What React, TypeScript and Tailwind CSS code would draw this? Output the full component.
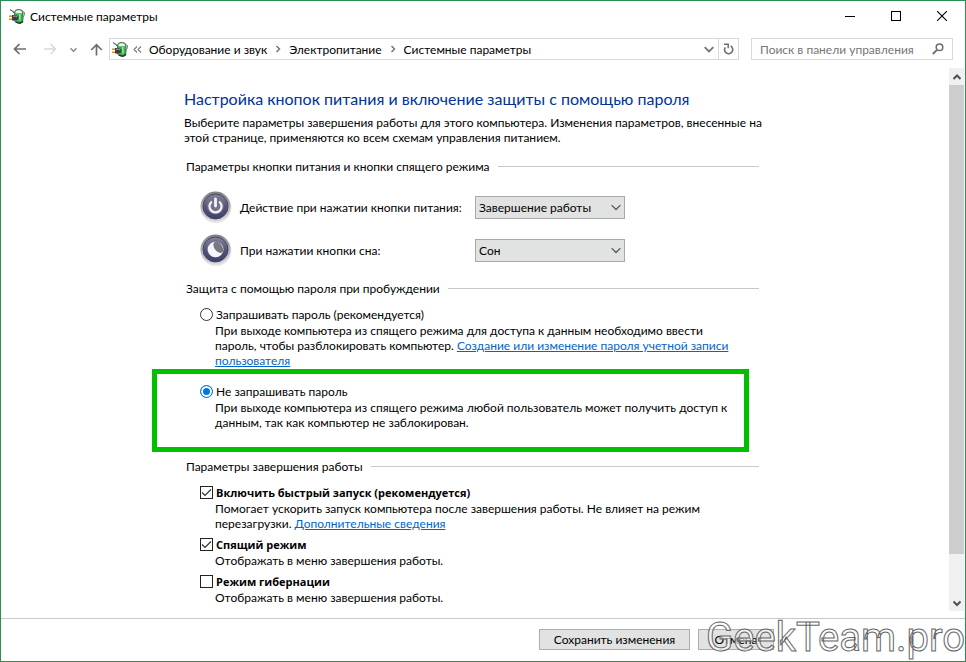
import React, { useState } from 'react';

const PowerAppIcon: React.FC = () => (
  <svg width="16" height="16" viewBox="0 0 16 16" className="shrink-0">
    <rect x="5.5" y="1.5" width="8.5" height="13.5" rx="3.5" fill="#2fb548" stroke="#5b6b5d" />
    <path d="M6.5 3.8C7 1.6 12.5 1.6 13 3.8v1.4H6.5z" fill="#eef3ee" />
    <path d="M10.8 6v6.5" stroke="#8bea98" strokeWidth="1.6" />
    <path d="M13.5 3.8c2.6-.6 2.6 3 .6 5.4" fill="none" stroke="#777" />
    <path d="M1.2 1.4C2 3.6 4 1.8 5 5" fill="none" stroke="#555" strokeWidth="1.1" />
    <path d="M0 8.2h3M0 11.2h3" stroke="#e0901c" strokeWidth="1.5" />
    <path d="M3 7h3.4l3 1.4v2.8l-3 1.4H3z" fill="#3d3d42" />
    <path d="M4 8.2h2.4l1.8.8" fill="none" stroke="#a5a5ad" />
    <path d="M7 14.2l4 1.2 3.2-2" fill="none" stroke="#2c2f31" strokeWidth="1.3" />
  </svg>
);

const RoundIcon: React.FC<{ kind: 'power' | 'sleep' }> = ({ kind }) => (
  <svg width="32" height="32" viewBox="0 0 32 32" className="shrink-0">
    <defs>
      <linearGradient id={`ring-${kind}`} x1="0" y1="0" x2="0" y2="1">
        <stop offset="0" stopColor="#7f7f82" />
        <stop offset="1" stopColor="#dcdce0" />
      </linearGradient>
      <linearGradient id={`face-${kind}`} x1="0" y1="0" x2="0" y2="1">
        <stop offset="0" stopColor="#85869a" />
        <stop offset="0.5" stopColor="#55567a" />
        <stop offset="1" stopColor="#3f4068" />
      </linearGradient>
    </defs>
    <circle cx="16" cy="16.5" r="15.5" fill="#e6e6e9" />
    <circle cx="15.5" cy="15.5" r="15" fill={`url(#ring-${kind})`} />
    <circle cx="15.5" cy="15.5" r="12.5" fill={`url(#face-${kind})`} stroke="#44455f" />
    <circle cx="15.5" cy="15" r="8.5" fill="#73748c" />
    {kind === 'power' ? (
      <g fill="none" stroke="#f4f4f8" strokeWidth="2.2" strokeLinecap="round">
        <path d="M11.2 11.2a6 6 0 1 0 8.6 0" />
        <path d="M15.5 8v7" strokeWidth="2.8" />
      </g>
    ) : (
      <g>
        <circle cx="15.5" cy="15.5" r="7.8" fill="#f6f6fa" />
        <ellipse cx="18.3" cy="13.3" rx="3.8" ry="6.4" transform="rotate(-38 18.3 13.3)" fill="#77787f" />
      </g>
    )}
  </svg>
);

interface ChevronProps {
  dir: 'down' | 'up' | 'right';
  size?: number;
  color?: string;
  width?: number;
}

const Chevron: React.FC<ChevronProps> = ({ dir, size = 8, color = '#777', width = 1.5 }) => {
  const paths = { down: 'M0.5 2.5 4 6 7.5 2.5', up: 'M0.5 6 4 2.5 7.5 6', right: 'M2.5 1 5.5 4 2.5 7' };
  return (
    <svg width={size} height={size} viewBox="0 0 8 8" className="pointer-events-none shrink-0">
      <path d={paths[dir]} fill="none" stroke={color} strokeWidth={width} />
    </svg>
  );
};

const Legend: React.FC<{ children: string }> = ({ children }) => (
  <div className="flex items-center gap-2 pl-0.5">
    <h2>{children}</h2>
    <div className="h-px flex-1 bg-[#c8c8c8]" />
  </div>
);

interface ActionRowProps {
  id: string;
  kind: 'power' | 'sleep';
  label: string;
  options: string[];
}

const ActionRow: React.FC<ActionRowProps> = ({ id, kind, label, options }) => (
  <div className="flex h-8 items-center">
    <RoundIcon kind={kind} />
    <label htmlFor={id} className="w-[243px] pl-2">{label}</label>
    <div className="grid w-[150px] items-center">
      <select
        id={id}
        className="col-start-1 row-start-1 h-[23px] appearance-none border border-[#a9a9a9] bg-[#e1e2e2] px-[3px]"
      >
        {options.map((option) => (
          <option key={option}>{option}</option>
        ))}
      </select>
      <div className="pointer-events-none col-start-1 row-start-1 mr-1 justify-self-end">
        <Chevron dir="down" size={10} color="#555" width={1} />
      </div>
    </div>
  </div>
);

interface RadioOptionProps {
  id: string;
  label: string;
  checked: boolean;
  onSelect: () => void;
  children: React.ReactNode;
}

const RadioOption: React.FC<RadioOptionProps> = ({ id, label, checked, onSelect, children }) => (
  <div>
    <div className="flex items-center gap-[3px]">
      <input
        id={id}
        type="radio"
        name="wake-password"
        checked={checked}
        onChange={onSelect}
        className="size-[13px] appearance-none rounded-full border border-[#333] bg-white checked:border-[#0078d7] checked:bg-[#0078d7] checked:shadow-[inset_0_0_0_2px_white]"
      />
      <label htmlFor={id}>{label}</label>
    </div>
    <p className="pt-px pb-px pl-[15px]">{children}</p>
  </div>
);

interface CheckOptionProps {
  id: string;
  label: string;
  defaultChecked?: boolean;
  children: React.ReactNode;
}

const CheckOption: React.FC<CheckOptionProps> = ({ id, label, defaultChecked, children }) => (
  <div>
    <div className="flex items-center gap-[3px]">
      <div className="grid size-[13px]">
        <input
          id={id}
          type="checkbox"
          defaultChecked={defaultChecked}
          className="peer col-start-1 row-start-1 size-[13px] appearance-none border border-[#222] bg-white"
        />
        <svg viewBox="0 0 13 13" className="pointer-events-none invisible col-start-1 row-start-1 size-[13px] peer-checked:visible">
          <path d="M2 6.5 5 9.5 11 3.5" fill="none" stroke="#333" strokeWidth="1.2" />
        </svg>
      </div>
      <label htmlFor={id} className="font-['Open_Sans',sans-serif] text-[11px] leading-[15px] font-bold">{label}</label>
    </div>
    <p className="pt-px pb-px pl-[15px]">{children}</p>
  </div>
);

const TitleBar: React.FC = () => (
  <header className="flex h-[30px] items-center pl-2">
    <PowerAppIcon />
    <h1 className="flex-1 pl-[5px]">Системные параметры</h1>
    <button aria-label="Свернуть" className="flex h-full w-[46px] items-center justify-center">
      <svg width="11" height="11"><path d="M0 5.5h10" stroke="#000" /></svg>
    </button>
    <button aria-label="Развернуть" className="flex h-full w-[46px] items-center justify-center">
      <svg width="10" height="10"><rect x="0.5" y="0.5" width="9" height="9" fill="none" stroke="#000" /></svg>
    </button>
    <button aria-label="Закрыть" className="flex h-full w-[46px] items-center justify-center">
      <svg width="10" height="10"><path d="M0 0 10 10M10 0 0 10" stroke="#000" strokeWidth="1.1" /></svg>
    </button>
  </header>
);

const NavBar: React.FC = () => (
  <nav className="flex items-center pt-[7px] pr-3 pb-2 pl-3">
    <button aria-label="Назад" className="w-[15px]">
      <svg width="14" height="12" viewBox="0 0 14 12"><path d="M13 6H2M6.5 1 1.5 6l5 5" fill="none" stroke="#6d6d6d" strokeWidth="1.7" /></svg>
    </button>
    <button aria-label="Вперед" className="ml-[15px] w-[15px]">
      <svg width="14" height="12" viewBox="0 0 14 12"><path d="M1 6h11M7.5 1l5 5-5 5" fill="none" stroke="#d9d9d9" strokeWidth="1.5" /></svg>
    </button>
    <button aria-label="Последние расположения" className="ml-3 w-2">
      <Chevron dir="down" size={7} color="#888" />
    </button>
    <button aria-label="Вверх" className="ml-3 w-[14px]">
      <svg width="13" height="13" viewBox="0 0 13 13"><path d="M6.5 12.5V2M1.2 7l5.3-5.3L11.8 7" fill="none" stroke="#6d6d6d" strokeWidth="1.7" /></svg>
    </button>

    {/* Address */}
    <div className="ml-[5px] flex h-[22px] flex-1 items-center border border-[#d9d9d9] pl-[2px]">
      <PowerAppIcon />
      <svg width="9" height="7" viewBox="0 0 9 7" className="ml-[5px]"><path d="M4 0.5 1 3.5l3 3M8 0.5 5 3.5l3 3" fill="none" stroke="#777" strokeWidth="1.1" /></svg>
      <button className="ml-[7px]">Оборудование и звук</button>
      <div className="px-[7px]"><Chevron dir="right" /></div>
      <button>Электропитание</button>
      <div className="px-[7px]"><Chevron dir="right" /></div>
      <button>Системные параметры</button>
      <button aria-label="Предыдущие расположения" className="mr-1 ml-auto">
        <Chevron dir="down" size={10} color="#777" />
      </button>
      <button aria-label="Обновить" className="flex h-full w-5 items-center justify-center border-l border-[#d9d9d9]">
        <svg width="11" height="12" viewBox="0 0 11 12">
          <path d="M7.6 3A4.1 4.1 0 1 1 2.2 4.4" fill="none" stroke="#6d6d6d" strokeWidth="1.6" />
          <path d="M1 1.2h4.2v4" fill="none" stroke="#6d6d6d" strokeWidth="1.5" />
        </svg>
      </button>
    </div>

    {/* Search */}
    <div className="ml-3 flex h-[22px] w-[202px] items-center border border-[#d9d9d9] px-2">
      <input
        type="search"
        aria-label="Поиск"
        placeholder="Поиск в панели управления"
        className="min-w-0 flex-1 outline-none placeholder:text-[#767676]"
      />
      <svg width="12" height="12" viewBox="0 0 12 12" className="shrink-0">
        <circle cx="7.5" cy="4.3" r="3.3" fill="none" stroke="#6d6d6d" strokeWidth="1.5" />
        <path d="M5 6.8.8 11" stroke="#6d6d6d" strokeWidth="1.9" />
      </svg>
    </div>
  </nav>
);

const ScrollBar: React.FC = () => (
  <div className="mr-px flex w-[15px] flex-col bg-[#f0f0f0]">
    <button aria-label="Прокрутить вверх" className="flex h-[17px] items-center justify-center">
      <Chevron dir="up" color="#505050" width={2} />
    </button>
    <div className="h-[469px] bg-[#cdcdcd]" />
    <button aria-label="Прокрутить вниз" className="mt-auto flex h-[17px] items-center justify-center">
      <Chevron dir="down" color="#505050" width={2} />
    </button>
  </div>
);

const App: React.FC = () => {
  const [askPassword, setAskPassword] = useState(false);

  return (
    <div className="relative flex min-h-screen flex-col overflow-hidden border border-[#2a8f55] bg-white font-[Lato,'Open_Sans',sans-serif] text-[12px] leading-[15px] text-black">
      <TitleBar />
      <NavBar />

      <div className="flex flex-1 pb-[7px]">
        <main className="flex-1 pt-[19px] pb-[5px] pl-[183px]">
          <div className="max-w-[575px] whitespace-nowrap">
            <h2 className="text-[16px] leading-6 text-[#003399]">
              Настройка кнопок питания и включение защиты с помощью пароля
            </h2>
            <p className="mt-1">
              Выберите параметры завершения работы для этого компьютера. Изменения параметров, внесенные на
              <br />
              этой странице, применяются ко всем схемам управления питанием.
            </p>

            {/* Buttons */}
            <section className="mt-[14px]">
              <Legend>Параметры кнопки питания и кнопки спящего режима</Legend>
              <div className="mt-[17px] flex flex-col gap-[11px] pl-4">
                <ActionRow
                  id="power-action"
                  kind="power"
                  label="Действие при нажатии кнопки питания:"
                  options={['Завершение работы', 'Сон', 'Действие не требуется']}
                />
                <ActionRow
                  id="sleep-action"
                  kind="sleep"
                  label="При нажатии кнопки сна:"
                  options={['Сон', 'Завершение работы', 'Действие не требуется']}
                />
              </div>
            </section>

            {/* Password */}
            <section className="mt-[15px]">
              <Legend>Защита с помощью пароля при пробуждении</Legend>
              <div className="mt-[11px] pl-4">
                <RadioOption
                  id="ask"
                  label="Запрашивать пароль (рекомендуется)"
                  checked={askPassword}
                  onSelect={() => setAskPassword(true)}
                >
                  При выходе компьютера из спящего режима для доступа к данным необходимо ввести
                  <br />
                  пароль, чтобы разблокировать компьютер.{' '}
                  <a href="#account" className="text-[#0066cc] underline">
                    Создание или изменение пароля учетной записи
                    <br />
                    пользователя
                  </a>
                </RadioOption>
              </div>
              <div className="-ml-8 w-[597px] border-5 border-[#00c000] pt-[10px] pb-4 pl-[43px]">
                <RadioOption
                  id="dont-ask"
                  label="Не запрашивать пароль"
                  checked={!askPassword}
                  onSelect={() => setAskPassword(false)}
                >
                  При выходе компьютера из спящего режима любой пользователь может получить доступ к
                  <br />
                  данным, так как компьютер не заблокирован.
                </RadioOption>
              </div>
            </section>

            {/* Shutdown */}
            <section className="mt-[7px]">
              <Legend>Параметры завершения работы</Legend>
              <div className="mt-[11px] flex flex-col gap-[5px] pl-4">
                <CheckOption id="fast-start" label="Включить быстрый запуск (рекомендуется)" defaultChecked>
                  Помогает ускорить запуск компьютера после завершения работы. Не влияет на режим
                  <br />
                  перезагрузки.{' '}
                  <a href="#more" className="text-[#0066cc] underline">Дополнительные сведения</a>
                </CheckOption>
                <CheckOption id="sleep" label="Спящий режим" defaultChecked>
                  Отображать в меню завершения работы.
                </CheckOption>
                <CheckOption id="hibernate" label="Режим гибернации">
                  Отображать в меню завершения работы.
                </CheckOption>
              </div>
            </section>
          </div>
        </main>
        <ScrollBar />
      </div>

      <footer className="flex justify-end gap-2 border-t border-[#c8c8c8] pt-[10px] pr-[191px] pb-[11px]">
        <button className="h-[21px] w-[151px] border border-[#adadad] bg-[#e1e2e2]">Сохранить изменения</button>
        <button className="h-[21px] w-[76px] border border-[#adadad] bg-[#e1e2e2]">Отмена</button>
      </footer>

      <div className="pointer-events-none absolute right-0 bottom-0 font-[Roboto,sans-serif] text-[40px] leading-[46px] text-white/60 [-webkit-text-stroke:1px_#666]">
        GeekTeam.pro
      </div>
    </div>
  );
};

export default App;
